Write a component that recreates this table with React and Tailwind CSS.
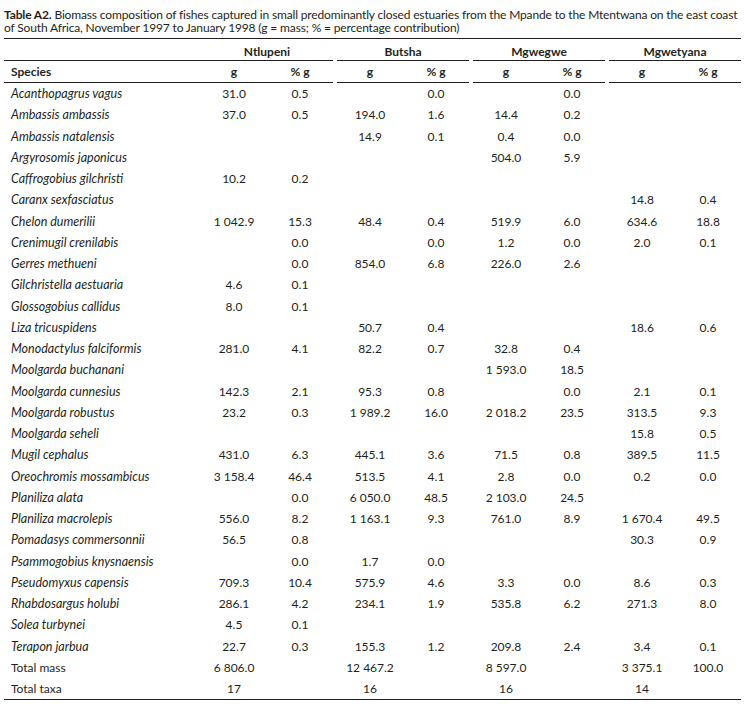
import React from "react";

const rows = [
  ["Acanthopagrus vagus", "31.0", "0.5", "", "0.0", "", "0.0", "", ""],
  ["Ambassis ambassis", "37.0", "0.5", "194.0", "1.6", "14.4", "0.2", "", ""],
  ["Ambassis natalensis", "", "", "14.9", "0.1", "0.4", "0.0", "", ""],
  ["Argyrosomis japonicus", "", "", "", "", "504.0", "5.9", "", ""],
  ["Caffrogobius gilchristi", "10.2", "0.2", "", "", "", "", "", ""],
  ["Caranx sexfasciatus", "", "", "", "", "", "", "14.8", "0.4"],
  ["Chelon dumerilii", "1 042.9", "15.3", "48.4", "0.4", "519.9", "6.0", "634.6", "18.8"],
  ["Crenimugil crenilabis", "", "0.0", "", "0.0", "1.2", "0.0", "2.0", "0.1"],
  ["Gerres methueni", "", "0.0", "854.0", "6.8", "226.0", "2.6", "", ""],
  ["Gilchristella aestuaria", "4.6", "0.1", "", "", "", "", "", ""],
  ["Glossogobius callidus", "8.0", "0.1", "", "", "", "", "", ""],
  ["Liza tricuspidens", "", "", "50.7", "0.4", "", "", "18.6", "0.6"],
  ["Monodactylus falciformis", "281.0", "4.1", "82.2", "0.7", "32.8", "0.4", "", ""],
  ["Moolgarda buchanani", "", "", "", "", "1 593.0", "18.5", "", ""],
  ["Moolgarda cunnesius", "142.3", "2.1", "95.3", "0.8", "", "0.0", "2.1", "0.1"],
  ["Moolgarda robustus", "23.2", "0.3", "1 989.2", "16.0", "2 018.2", "23.5", "313.5", "9.3"],
  ["Moolgarda seheli", "", "", "", "", "", "", "15.8", "0.5"],
  ["Mugil cephalus", "431.0", "6.3", "445.1", "3.6", "71.5", "0.8", "389.5", "11.5"],
  ["Oreochromis mossambicus", "3 158.4", "46.4", "513.5", "4.1", "2.8", "0.0", "0.2", "0.0"],
  ["Planiliza alata", "", "0.0", "6 050.0", "48.5", "2 103.0", "24.5", "", ""],
  ["Planiliza macrolepis", "556.0", "8.2", "1 163.1", "9.3", "761.0", "8.9", "1 670.4", "49.5"],
  ["Pomadasys commersonnii", "56.5", "0.8", "", "", "", "", "30.3", "0.9"],
  ["Psammogobius knysnaensis", "", "0.0", "1.7", "0.0", "", "", "", ""],
  ["Pseudomyxus capensis", "709.3", "10.4", "575.9", "4.6", "3.3", "0.0", "8.6", "0.3"],
  ["Rhabdosargus holubi", "286.1", "4.2", "234.1", "1.9", "535.8", "6.2", "271.3", "8.0"],
  ["Solea turbynei", "4.5", "0.1", "", "", "", "", "", ""],
  ["Terapon jarbua", "22.7", "0.3", "155.3", "1.2", "209.8", "2.4", "3.4", "0.1"],
];

const totals = [
  ["Total mass", "6 806.0", "", "12 467.2", "", "8 597.0", "", "3 375.1", "100.0"],
  ["Total taxa", "17", "", "16", "", "16", "", "14", ""],
];

const groups = ["Butsha", "Mgwegwe", "Mgwetyana"];

function DataRow({ row, italic }) {
  return (
    <div className="flex h-[21.25px] items-center">
      <div className={`w-[197px] pl-[7px] ${italic ? "italic text-[12.5px]" : ""}`}>{row[0]}</div>
      {[0, 1, 2, 3].map((gi) => (
        <div key={gi} className={`flex w-[132px] ${gi > 0 ? "ml-[4px]" : ""}`}>
          <div className="w-[66px] text-center">{row[1 + gi * 2]}</div>
          <div className="w-[66px] text-center">{row[2 + gi * 2]}</div>
        </div>
      ))}
    </div>
  );
}

export default function App() {
  return (
    <div className="w-[749px] h-[704px] bg-white px-[4px] text-[12px] leading-[13px] text-[#231f20] font-['Lato',sans-serif]">
      {/* Caption */}
      <div className="pt-[8px] pb-[4px] text-[12px] leading-[13px] tracking-[-0.15px] whitespace-nowrap">
        <span className="font-bold">Table A2.</span> Biomass composition of fishes captured in small
        predominantly closed estuaries from the Mpande to the Mtentwana on the east coast
        <br />
        of South Africa, November 1997 to January 1998 (g = mass; % = percentage contribution)
      </div>

      <div className="w-[737px] border-t border-[#231f20]">
        {/* Group header */}
        <div className="flex h-[22px] font-bold">
          <div className="flex w-[329px] border-b border-[#231f20]">
            <div className="w-[197px]" />
            <div className="w-[132px] pt-[6px] text-center">Ntlupeni</div>
          </div>
          {groups.map((g) => (
            <div key={g} className="ml-[4px] w-[132px] pt-[6px] text-center border-b border-[#231f20]">
              {g}
            </div>
          ))}
        </div>

        {/* Column header */}
        <div className="flex h-[22px] font-bold">
          <div className="flex w-[329px] items-center border-b border-[#231f20]">
            <div className="w-[197px] pl-[7px]">Species</div>
            <div className="w-[66px] text-center">g</div>
            <div className="w-[66px] text-center">% g</div>
          </div>
          {groups.map((g) => (
            <div key={g} className="ml-[4px] flex w-[132px] items-center border-b border-[#231f20]">
              <div className="w-[66px] text-center">g</div>
              <div className="w-[66px] text-center">% g</div>
            </div>
          ))}
        </div>

        {rows.map((r) => (
          <DataRow key={r[0]} row={r} italic />
        ))}
        <div className="border-b border-[#231f20]">
          {totals.map((r) => (
            <DataRow key={r[0]} row={r} />
          ))}
        </div>
      </div>
    </div>
  );
}
